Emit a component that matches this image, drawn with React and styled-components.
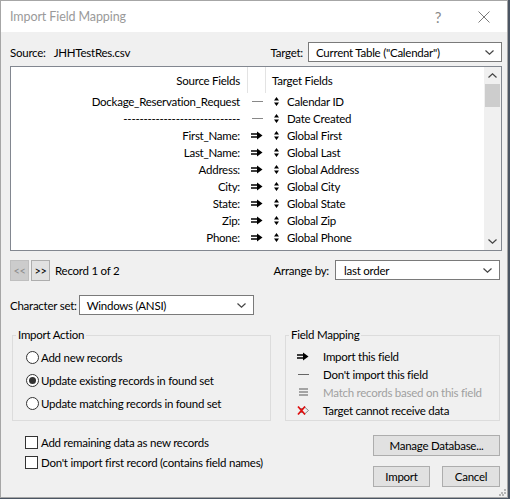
import React from "react";
import styled, { createGlobalStyle } from "styled-components";

const GlobalStyle = createGlobalStyle`
  body {
    margin: 0;
    background: #4b5563;
    font-family: Lato, "Liberation Sans", sans-serif;
    font-size: 11.5px;
    letter-spacing: -0.25px;
    color: #000;
  }
`;

const sourceRows = [
  { source: "Dockage_Reservation_Request", mode: "skip", target: "Calendar ID" },
  { source: "-----------------------------", mode: "skip", target: "Date Created" },
  { source: "First_Name:", mode: "import", target: "Global First" },
  { source: "Last_Name:", mode: "import", target: "Global Last" },
  { source: "Address:", mode: "import", target: "Global Address" },
  { source: "City:", mode: "import", target: "Global City" },
  { source: "State:", mode: "import", target: "Global State" },
  { source: "Zip:", mode: "import", target: "Global Zip" },
  { source: "Phone:", mode: "import", target: "Global Phone" },
];

const ArrowIcon = ({ color = "#000" }) => (
  <svg width="12" height="9" viewBox="0 0 12 9">
    <path d="M0 3h6.5M0 6h6.5" stroke={color} strokeWidth="1.6" />
    <path d="M6 0.5L11.5 4.5L6 8.5z" fill={color} />
  </svg>
);

const DashIcon = ({ color = "#888" }) => (
  <svg width="11" height="9" viewBox="0 0 11 9">
    <path d="M0 4.5h11" stroke={color} strokeWidth="1" />
  </svg>
);

const UpDownIcon = () => (
  <svg width="5" height="9" viewBox="0 0 5 9">
    <path d="M2.5 0L5 3.5H0z M2.5 9L5 5.5H0z" fill="#000" />
  </svg>
);

const MatchIcon = () => (
  <svg width="9" height="8" viewBox="0 0 9 8">
    <path d="M0 1h9M0 4h9M0 7h9" stroke="#8a8a8a" strokeWidth="1.4" />
  </svg>
);

const BlockedIcon = () => (
  <svg width="13" height="11" viewBox="0 0 13 11">
    <path d="M2 3.5h5M2 7.5h5M7 1.5L11.5 5.5L7 9.5" stroke="#8a8a8a" strokeWidth="1" fill="none" />
    <path d="M1 1.5L8 9.5M8 1.5L1 9.5" stroke="#e01010" strokeWidth="1.8" />
  </svg>
);

const Chevron = ({ up }) => (
  <svg width="9" height="5" viewBox="0 0 9 5">
    <path d={up ? "M0.5 4.5L4.5 0.8L8.5 4.5" : "M0.5 0.5L4.5 4.2L8.5 0.5"} stroke="#444" strokeWidth="1.2" fill="none" />
  </svg>
);

const Window = styled.div`
  position: relative;
  width: 508px;
  height: 498px;
  box-sizing: border-box;
  border: 1px solid #a6a6a6;
  background: #f0f0f0;
  display: flex;
  flex-direction: column;
`;

const TitleBar = styled.div`
  height: 31px;
  background: #fff;
  display: flex;
  align-items: center;
  padding-left: 9px;
`;

const Title = styled.div`
  flex: 1;
  font-size: 12.5px;
  letter-spacing: -0.1px;
  color: #9a9a9a;
`;

const TitleButton = styled.div`
  width: 46px;
  height: 31px;
  display: flex;
  align-items: center;
  justify-content: center;
  color: #8a8a8a;
  font-size: 15px;
`;

const Body = styled.div`
  flex: 1;
  display: flex;
  flex-direction: column;
  padding: 0 5px 0 9px;
`;

const Row = styled.div`
  display: flex;
  align-items: center;
  height: ${(p) => p.$h || 20}px;
  margin-top: ${(p) => p.$mt || 0}px;
`;

const Label = styled.span`
  margin-left: ${(p) => p.$ml || 0}px;
  margin-right: ${(p) => p.$mr || 0}px;
  white-space: pre;
`;

const Spacer = styled.div`
  flex: ${(p) => (p.$w ? `0 0 ${p.$w}px` : 1)};
`;

const Select = styled.div`
  box-sizing: border-box;
  width: ${(p) => p.$w}px;
  height: ${(p) => p.$h || 20}px;
  border: 1px solid #7a7a7a;
  background: #fff;
  display: flex;
  align-items: center;
  padding: 0 7px 0 ${(p) => p.$pl || 7}px;
  span {
    flex: 1;
  }
`;

const ListBox = styled.div`
  margin-top: 4px;
  height: 185px;
  box-sizing: border-box;
  border: 1px solid #828790;
  background: #fff;
  display: flex;
  overflow: hidden;
`;

const Table = styled.div`
  flex: 1;
  display: flex;
  flex-direction: column;
`;

const ListRow = styled.div`
  display: grid;
  grid-template-columns: 236px 19px 1fr;
  height: ${(p) => (p.$header ? 26 : 17)}px;
  align-items: center;
`;

const SourceCell = styled.div`
  text-align: right;
  padding-right: 7px;
  white-space: nowrap;
  overflow: hidden;
`;

const MidCell = styled.div`
  height: 100%;
  display: flex;
  align-items: center;
  justify-content: center;
  border-left: ${(p) => (p.$header ? "1px solid #e3e3e3" : "none")};
  border-right: ${(p) => (p.$header ? "1px solid #e3e3e3" : "none")};
  box-sizing: border-box;
  padding-left: 1px;
`;

const TargetCell = styled.div`
  display: flex;
  align-items: center;
  gap: 8px;
  padding-left: ${(p) => (p.$header ? 6 : 8)}px;
  white-space: nowrap;
`;

const ScrollBar = styled.div`
  width: 17px;
  background: #f0f0f0;
  display: flex;
  flex-direction: column;
  align-items: center;
`;

const ScrollArrow = styled.div`
  height: 17px;
  display: flex;
  align-items: center;
  justify-content: center;
`;

const Thumb = styled.div`
  width: 15px;
  height: 23px;
  background: #cdcdcd;
`;

const NavButton = styled.div`
  box-sizing: border-box;
  width: 19px;
  height: 21px;
  border: 1px solid ${(p) => (p.$disabled ? "#bfbfbf" : "#adadad")};
  background: ${(p) => (p.$disabled ? "#cccccc" : "#e1e1e1")};
  color: ${(p) => (p.$disabled ? "#8c8c8c" : "#000")};
  display: flex;
  align-items: center;
  justify-content: center;
  font-size: 11px;
  letter-spacing: -0.5px;
  margin-right: ${(p) => p.$mr || 0}px;
`;

const Groups = styled.div`
  display: flex;
  justify-content: space-between;
  margin-top: 13px;
  padding: 0 2px;
`;

const GroupBox = styled.fieldset`
  box-sizing: border-box;
  width: ${(p) => p.$w}px;
  height: 93px;
  margin: 0;
  border: 1px solid #dcdcdc;
  padding: ${(p) => p.$pt}px 0 0 0;
  display: flex;
  flex-direction: column;
  legend {
    padding: 0 2px;
    margin-left: 3px;
    line-height: 14px;
  }
  & > div {
    padding-left: ${(p) => p.$pl}px;
  }
`;

const OptionRow = styled.div`
  display: flex;
  align-items: center;
  height: ${(p) => p.$h}px;
  gap: ${(p) => p.$gap}px;
  color: ${(p) => (p.$muted ? "#a0a0a0" : "#000")};
`;

const Radio = styled.span`
  box-sizing: border-box;
  width: 13px;
  height: 13px;
  border-radius: 50%;
  border: 1px solid #333;
  background: #fff;
  display: flex;
  align-items: center;
  justify-content: center;
  &::after {
    content: "";
    width: 7px;
    height: 7px;
    border-radius: 50%;
    background: ${(p) => (p.$checked ? "#333" : "transparent")};
  }
`;

const IconSlot = styled.span`
  width: 14px;
  display: flex;
  justify-content: center;
  align-items: center;
`;

const Bottom = styled.div`
  display: flex;
  justify-content: space-between;
  padding: 14px 2px 0 15px;
`;

const CheckList = styled.div`
  display: flex;
  flex-direction: column;
  margin-top: -3px;
`;

const CheckRow = styled.div`
  display: flex;
  align-items: center;
  gap: 3px;
  height: 20.5px;
`;

const Box = styled.span`
  box-sizing: border-box;
  width: 13px;
  height: 13px;
  border: 1px solid #333;
  background: #fff;
`;

const ButtonColumn = styled.div`
  display: flex;
  flex-direction: column;
  gap: 10px;
`;

const ButtonRow = styled.div`
  display: flex;
  gap: 12px;
`;

const Button = styled.div`
  box-sizing: border-box;
  width: ${(p) => p.$w}px;
  height: 21px;
  border: 1px solid #adadad;
  background: #e1e1e1;
  display: flex;
  align-items: center;
  justify-content: center;
`;

const Grip = styled.svg`
  position: absolute;
  right: 1px;
  bottom: 1px;
`;

export default function App() {
  return (
    <>
      <GlobalStyle />
      <Window>
        <TitleBar>
          <Title>Import Field Mapping</Title>
          <TitleButton>?</TitleButton>
          <TitleButton>
            <svg width="12" height="12" viewBox="0 0 12 12">
              <path d="M0.5 0.5L11.5 11.5M11.5 0.5L0.5 11.5" stroke="#7a7a7a" strokeWidth="1" />
            </svg>
          </TitleButton>
        </TitleBar>
        <Body>
          <Row $mt={10}>
            <Label $mr={8}>Source:</Label>
            <Label>JHHTestRes.csv</Label>
            <Spacer />
            <Label $mr={5}>Target:</Label>
            <Select $w={194}>
              <span>Current Table ("Calendar")</span>
              <Chevron />
            </Select>
          </Row>

          <ListBox>
            <Table>
              <ListRow $header>
                <SourceCell>Source Fields</SourceCell>
                <MidCell $header />
                <TargetCell $header>Target Fields</TargetCell>
              </ListRow>
              {sourceRows.map((r) => (
                <ListRow key={r.target}>
                  <SourceCell>{r.source}</SourceCell>
                  <MidCell>{r.mode === "import" ? <ArrowIcon /> : <DashIcon />}</MidCell>
                  <TargetCell>
                    <UpDownIcon />
                    {r.target}
                  </TargetCell>
                </ListRow>
              ))}
            </Table>
            <ScrollBar>
              <ScrollArrow>
                <Chevron up />
              </ScrollArrow>
              <Thumb />
              <Spacer />
              <ScrollArrow>
                <Chevron />
              </ScrollArrow>
            </ScrollBar>
          </ListBox>

          <Row $mt={8} $h={22}>
            <NavButton $disabled $mr={2}>&lt;&lt;</NavButton>
            <NavButton $mr={5}>&gt;&gt;</NavButton>
            <Label>Record 1 of 2</Label>
            <Spacer />
            <Label $mr={6}>Arrange by:</Label>
            <Select $w={165} $pl={8}>
              <span>last order</span>
              <Chevron />
            </Select>
            <Spacer $w={2} />
          </Row>

          <Row $mt={14}>
            <Label $mr={2}>Character set:</Label>
            <Select $w={175}>
              <span>Windows (ANSI)</span>
              <Chevron />
            </Select>
          </Row>

          <Groups>
            <GroupBox $w={259} $pt={4} $pl={13}>
              <legend>Import Action</legend>
              <OptionRow $h={23} $gap={2}>
                <Radio />
                Add new records
              </OptionRow>
              <OptionRow $h={23} $gap={2}>
                <Radio $checked />
                Update existing records in found set
              </OptionRow>
              <OptionRow $h={23} $gap={2}>
                <Radio />
                Update matching records in found set
              </OptionRow>
            </GroupBox>
            <GroupBox $w={215} $pt={5} $pl={10}>
              <legend>Field Mapping</legend>
              <OptionRow $h={18} $gap={13}>
                <IconSlot>
                  <ArrowIcon />
                </IconSlot>
                Import this field
              </OptionRow>
              <OptionRow $h={18} $gap={13}>
                <IconSlot>
                  <DashIcon color="#666" />
                </IconSlot>
                Don't import this field
              </OptionRow>
              <OptionRow $h={18} $gap={13} $muted>
                <IconSlot>
                  <MatchIcon />
                </IconSlot>
                Match records based on this field
              </OptionRow>
              <OptionRow $h={18} $gap={13}>
                <IconSlot>
                  <BlockedIcon />
                </IconSlot>
                Target cannot receive data
              </OptionRow>
            </GroupBox>
          </Groups>

          <Bottom>
            <CheckList>
              <CheckRow>
                <Box />
                Add remaining data as new records
              </CheckRow>
              <CheckRow>
                <Box />
                Don't import first record (contains field names)
              </CheckRow>
            </CheckList>
            <ButtonColumn>
              <Button $w={127}>Manage Database...</Button>
              <ButtonRow>
                <Button $w={57}>Import</Button>
                <Button $w={58}>Cancel</Button>
              </ButtonRow>
            </ButtonColumn>
          </Bottom>
        </Body>
        <Grip width="7" height="7" viewBox="0 0 7 7">
          <path d="M5 0h2v2H5zM2 3h2v2H2zM5 3h2v2H5zM0 5h2v2H0zM3 5h2v2H3z" fill="#b5b5b5" />
        </Grip>
      </Window>
    </>
  );
}
